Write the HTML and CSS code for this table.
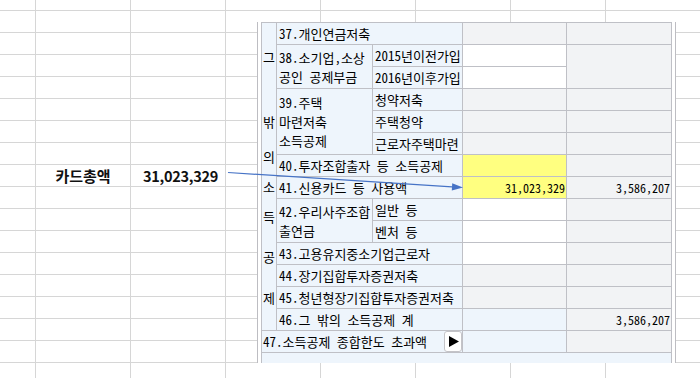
FILE: index.html
```html
<!DOCTYPE html>
<html lang="ko">
<head>
<meta charset="utf-8">
<title>그 밖의 소득공제</title>
<link rel="stylesheet" href="styles.css">
</head>
<body>
<div class="sheet">
  <div class="total-label">카드총액</div>
  <div class="total-value">31,023,329</div>
</div>

<div class="panel">
  <div class="form">
    <div class="c side">
      <span class="ch s1">그</span>
      <span class="ch s2">밖</span>
      <span class="ch s3">의</span>
      <span class="ch s4">소</span>
      <span class="ch s5">득</span>
      <span class="ch s6">공</span>
      <span class="ch s7">제</span>
    </div>

    <div class="c lbl span-c2">37.개인연금저축</div>
    <div class="c g"></div>
    <div class="c g"></div>

    <div class="c lbl multi span-r2">38.소기업,소상<br>공인 공제부금</div>
    <div class="c lbl">2015년이전가입</div>
    <div class="c w"></div>
    <div class="c g span-r2"></div>
    <div class="c lbl">2016년이후가입</div>
    <div class="c w"></div>

    <div class="c lbl multi span-r3">39.주택<br>마련저축<br>소득공제</div>
    <div class="c lbl">청약저축</div>
    <div class="c g"></div>
    <div class="c g"></div>
    <div class="c lbl">주택청약</div>
    <div class="c g"></div>
    <div class="c g"></div>
    <div class="c lbl">근로자주택마련</div>
    <div class="c g"></div>
    <div class="c g"></div>

    <div class="c lbl span-c2">40.투자조합출자 등 소득공제</div>
    <div class="c y"></div>
    <div class="c g"></div>

    <div class="c lbl span-c2">41.신용카드 등 사용액</div>
    <div class="c y num">31,023,329</div>
    <div class="c g num">3,586,207</div>

    <div class="c lbl multi span-r2">42.우리사주조합<br>출연금</div>
    <div class="c lbl">일반 등</div>
    <div class="c w"></div>
    <div class="c g"></div>
    <div class="c lbl">벤처 등</div>
    <div class="c w"></div>
    <div class="c g"></div>

    <div class="c lbl span-c2">43.고용유지중소기업근로자</div>
    <div class="c w"></div>
    <div class="c g"></div>

    <div class="c lbl span-c2">44.장기집합투자증권저축</div>
    <div class="c g"></div>
    <div class="c g"></div>

    <div class="c lbl span-c2">45.청년형장기집합투자증권저축</div>
    <div class="c g"></div>
    <div class="c g"></div>

    <div class="c lbl span-c2">46.그 밖의 소득공제 계</div>
    <div class="c lbl"></div>
    <div class="c g num">3,586,207</div>

    <div class="c lbl span-c3 total-row">
      <span class="total-text">47.소득공제 종합한도 초과액</span>
      <span class="go-btn">
        <svg width="10" height="11" viewBox="0 0 10 11" aria-hidden="true"><polygon points="0,0 10,5.5 0,11" fill="#000"/></svg>
      </span>
    </div>
    <div class="c lbl"></div>
    <div class="c g"></div>
  </div>
  <div class="panel-foot"></div>
</div>

<svg class="arrow" width="700" height="378" viewBox="0 0 700 378" aria-hidden="true">
  <line x1="228" y1="172.5" x2="452" y2="186.8" stroke="#4673c6" stroke-width="1.2"/>
  <polygon points="463,187.5 452.2,183.2 451.8,190.4" fill="#4673c6"/>
</svg>
</body>
</html>
```

FILE: styles.css
```css
html, body {
  margin: 0;
  padding: 0;
}

body {
  width: 700px;
  height: 378px;
  overflow: hidden;
  position: relative;
  background-color: #ffffff;
  background-image:
    repeating-linear-gradient(to bottom, transparent 0 21px, #d6d6d6 21px 22px),
    repeating-linear-gradient(to right, transparent 0 94px, #d6d6d6 94px 95px);
  background-position: 0 -11px, -59px 0;
  font-family: "Noto Sans CJK KR", "Noto Sans", sans-serif;
  color: #000;
}

/* spreadsheet cells behind the form */
.sheet {
  display: grid;
  grid-template-columns: 36px 95px 95px;
  grid-template-rows: 11px repeat(7, 22px) 21px;
}

.total-label,
.total-value {
  grid-row: 9;
  display: flex;
  align-items: center;
  font-weight: 700;
  line-height: 21px;
  color: #111;
}

.total-label {
  grid-column: 2;
  justify-content: center;
  padding-right: 1px;
  font-size: 15px;
}

.total-value {
  grid-column: 3;
  justify-content: flex-end;
  padding-right: 8px;
  font-size: 14.5px;
  letter-spacing: -0.3px;
}

/* floating form panel */
.panel {
  position: absolute;
  left: 257px;
  top: 22px;
  width: 419px;
  padding: 0 3px;
  box-sizing: border-box;
  border-left: 1px solid #bdbdc2;
  border-right: 1px solid #bdbdc2;
  background: #ffffff;
}

.form {
  display: grid;
  grid-template-columns: 14px 95px 89px 103px 104px;
  grid-auto-rows: 21px;
  gap: 1px;
  padding: 1px;
  background: #bfc0c6;
  width: 411px;
  box-sizing: border-box;
  font-family: "Noto Sans Mono CJK KR", "Noto Sans CJK KR", monospace;
  font-size: 13px;
}

.panel-foot {
  width: 411px;
  height: 10px;
  box-sizing: border-box;
  border-left: 1px solid #bfc0c6;
  border-right: 1px solid #bfc0c6;
  background: #eef5fc;
}

.c {
  display: flex;
  align-items: center;
  padding: 0 0 0 2px;
  white-space: nowrap;
  overflow: hidden;
  line-height: 15px;
}

.lbl { background: #eef5fc; }
.g   { background: #f2f3f5; }
.w   { background: #ffffff; }
.y   { background: #ffff80; }

.num {
  justify-content: flex-end;
  padding: 0 1px 0 0;
  font-size: 12px;
}

.multi { line-height: 19px; }

.span-c2 { grid-column: span 2; }
.span-c3 { grid-column: span 3; }
.span-r2 { grid-row: span 2; }
.span-r3 { grid-row: span 3; }

/* vertical title column */
.side {
  grid-row: span 14;
  background: #eef5fc;
  flex-direction: column;
  align-items: center;
  justify-content: flex-start;
  padding: 0;
}

.ch {
  display: block;
  height: 14px;
  line-height: 14px;
}

.s1 { margin-top: 27px; }
.s2 { margin-top: 51px; }
.s3 { margin-top: 21px; }
.s4 { margin-top: 16px; }
.s5 { margin-top: 16px; }
.s6 { margin-top: 26px; }
.s7 { margin-top: 27px; }

/* row 47 */
.total-row {
  justify-content: space-between;
  padding: 0 0 0 1px;
}

.go-btn {
  width: 18px;
  height: 21px;
  box-sizing: border-box;
  border: 1px solid #c4c4c8;
  border-radius: 3px;
  background: #ffffff;
  display: flex;
  align-items: center;
  justify-content: center;
  padding-left: 1px;
}

.go-btn svg {
  display: block;
}

.arrow {
  position: absolute;
  left: 0;
  top: 0;
  pointer-events: none;
}
```
